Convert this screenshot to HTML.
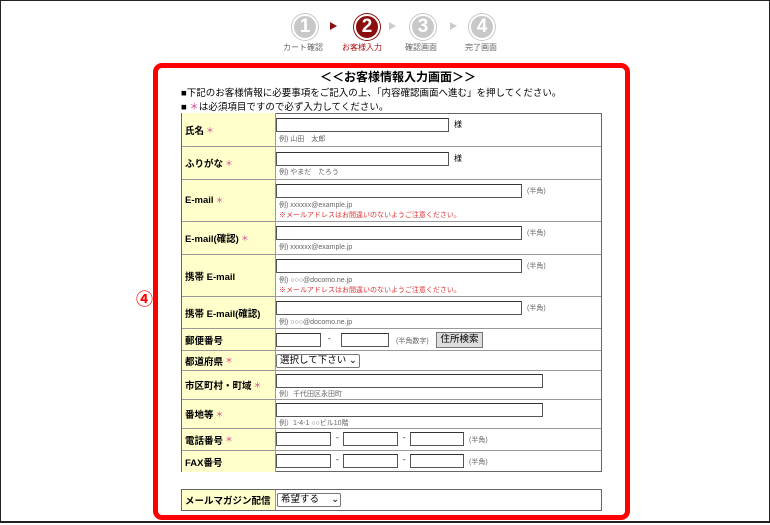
<!DOCTYPE html>
<html><head><meta charset="utf-8"><style>
*{box-sizing:border-box;margin:0;padding:0}
body{width:770px;height:525px;background:#fff;font-family:"Liberation Sans","Noto Sans CJK JP",sans-serif;position:relative;overflow:hidden;color:#000}
.frame{position:absolute;left:0;top:0;width:770px;height:523px;border:1px solid #222;border-bottom:2px solid #222}
.a{position:absolute}
.circ{position:absolute;width:26px;height:26px;border-radius:50%;background:#c8c8c8;border:2px solid #fff;box-shadow:0 0 0 1px #c8c8c8;color:#fff;font-weight:bold;font-size:19px;text-align:center;line-height:22px}
.circ.on{background:#8b0d0d;box-shadow:0 0 0 1px #8b0d0d}
.sl{position:absolute;top:42px;font-size:8px;color:#666;white-space:nowrap}
.tri{position:absolute;top:22px;width:0;height:0;border-left:7px solid #ccc;border-top:4px solid transparent;border-bottom:4px solid transparent}
.red{position:absolute;left:153px;top:63px;width:477px;height:457px;border:5px solid #f00;border-radius:9px}
.tbl{position:absolute;left:181px;width:421px;border:1px solid #666}
.row{position:absolute;left:0;width:419px;border-top:1px solid #999}
.lab{position:absolute;left:0;top:0;bottom:0;width:94px;background:#ffffcc;border-right:1px solid #999;font-size:9.5px;font-weight:bold;padding-left:3px;display:flex;align-items:center;white-space:nowrap;overflow:hidden}
.lab i{font-style:normal;color:#d43c8c;font-weight:normal;margin-left:2px;font-size:8px}
.in{position:absolute;height:14px;border:1px solid #555;border-top-color:#333;background:#fff}
.s{position:absolute;font-size:7px;color:#666;white-space:nowrap}
.w{color:#d33;}
.t{position:absolute;font-size:8px;white-space:nowrap}
</style></head><body>
<div class="frame"></div>
<div class="circ" style="left:292px;top:14px">1</div>
<div class="tri" style="left:330px;border-left-color:#8b0d0d"></div>
<div class="circ on" style="left:354px;top:14px">2</div>
<div class="tri" style="left:389px"></div>
<div class="circ" style="left:410px;top:14px">3</div>
<div class="tri" style="left:450px"></div>
<div class="circ" style="left:469px;top:14px">4</div>
<div class="sl" style="left:283px">カート確認</div>
<div class="sl" style="left:342px;color:#b01010">お客様入力</div>
<div class="sl" style="left:405px">確認画面</div>
<div class="sl" style="left:465px">完了画面</div>

<div class="red"></div>
<div class="a" style="left:136px;top:285px;color:#f00;font-size:17px;font-weight:bold">④</div>
<div class="a" style="left:320px;top:68px;font-size:12px;font-weight:bold">＜＜お客様情報入力画面＞＞</div>
<div class="a" style="left:181px;top:85px;font-size:9.5px;white-space:nowrap">■下記のお客様情報に必要事項をご記入の上、「内容確認画面へ進む」を押してください。</div>
<div class="a" style="left:181px;top:99px;font-size:9.5px;white-space:nowrap">■ <span style="color:#d43c8c">＊</span>は必須項目ですので必ず入力してください。</div>

<div class="tbl" style="top:113px;height:359px">
 <div class="row" style="top:-1px;height:34px;border-top:0"><div class="lab">氏名<i>＊</i></div>
  <div class="in" style="left:94px;top:5px;width:173px"></div><div class="t" style="left:272px;top:6px">様</div><div class="s" style="left:97px;top:21px">例) 山田　太郎</div></div>
 <div class="row" style="top:32px;height:33px"><div class="lab">ふりがな<i>＊</i></div>
  <div class="in" style="left:94px;top:5px;width:173px"></div><div class="t" style="left:272px;top:6px">様</div><div class="s" style="left:97px;top:20px">例) やまだ　たろう</div></div>
 <div class="row" style="top:65px;height:42px"><div class="lab">E-mail<i>＊</i></div>
  <div class="in" style="left:94px;top:4px;width:246px"></div><div class="s" style="left:345px;top:6px">(半角)</div><div class="s" style="left:97px;top:20px">例) xxxxxx@example.jp</div><div class="s w" style="left:97px;top:30px">※メールアドレスはお間違いのないようご注意ください。</div></div>
 <div class="row" style="top:107px;height:33px"><div class="lab">E-mail(確認)<i>＊</i></div>
  <div class="in" style="left:94px;top:4px;width:246px"></div><div class="s" style="left:345px;top:6px">(半角)</div><div class="s" style="left:97px;top:20px">例) xxxxxx@example.jp</div></div>
 <div class="row" style="top:140px;height:42px"><div class="lab">携帯 E-mail</div>
  <div class="in" style="left:94px;top:4px;width:246px"></div><div class="s" style="left:345px;top:6px">(半角)</div><div class="s" style="left:97px;top:20px">例) ○○○@docomo.ne.jp</div><div class="s w" style="left:97px;top:30px">※メールアドレスはお間違いのないようご注意ください。</div></div>
 <div class="row" style="top:182px;height:32px"><div class="lab">携帯 E-mail(確認)</div>
  <div class="in" style="left:94px;top:4px;width:246px"></div><div class="s" style="left:345px;top:6px">(半角)</div><div class="s" style="left:97px;top:20px">例) ○○○@docomo.ne.jp</div></div>
 <div class="row" style="top:214px;height:22px"><div class="lab">郵便番号</div>
  <div class="in" style="left:94px;top:4px;width:45px"></div><div class="t" style="left:146px;top:5px">-</div><div class="in" style="left:159px;top:4px;width:48px"></div><div class="s" style="left:214px;top:7px">(半角数字)</div>
  <div class="a" style="left:254px;top:3px;width:47px;height:16px;background:#ddd;border:1px solid #777;font-size:9.5px;text-align:center;line-height:14px">住所検索</div></div>
 <div class="row" style="top:236px;height:20px"><div class="lab">都道府県<i>＊</i></div>
  <div class="a" style="left:94px;top:3px;width:84px;height:14px;border:1px solid #777;border-radius:2px;font-size:9.5px;padding-left:3px;line-height:12px">選択して下さい ⌄</div></div>
 <div class="row" style="top:256px;height:29px"><div class="lab">市区町村・町域<i>＊</i></div>
  <div class="in" style="left:94px;top:3px;width:267px"></div><div class="s" style="left:97px;top:18px">例）千代田区永田町</div></div>
 <div class="row" style="top:285px;height:29px"><div class="lab">番地等<i>＊</i></div>
  <div class="in" style="left:94px;top:3px;width:267px"></div><div class="s" style="left:97px;top:18px">例）1-4-1 ○○ビル10階</div></div>
 <div class="row" style="top:314px;height:22px"><div class="lab">電話番号<i>＊</i></div>
  <div class="in" style="left:94px;top:3px;width:55px"></div><div class="t" style="left:154px;top:4px">-</div><div class="in" style="left:161px;top:3px;width:55px"></div><div class="t" style="left:221px;top:4px">-</div><div class="in" style="left:228px;top:3px;width:54px"></div><div class="s" style="left:287px;top:6px">(半角)</div></div>
 <div class="row" style="top:336px;height:22px"><div class="lab">FAX番号</div>
  <div class="in" style="left:94px;top:3px;width:55px"></div><div class="t" style="left:154px;top:4px">-</div><div class="in" style="left:161px;top:3px;width:55px"></div><div class="t" style="left:221px;top:4px">-</div><div class="in" style="left:228px;top:3px;width:54px"></div><div class="s" style="left:287px;top:6px">(半角)</div></div>
</div>

<div class="tbl" style="top:489px;height:22px">
 <div class="row" style="top:0;height:20px;border-top:0"><div class="lab">メールマガジン配信</div>
  <div class="a" style="left:95px;top:3px;width:64px;height:14px;border:1px solid #777;border-radius:2px;font-size:9.5px;padding-left:3px;line-height:12px">希望する　 ⌄</div></div>
</div>
</body></html>
